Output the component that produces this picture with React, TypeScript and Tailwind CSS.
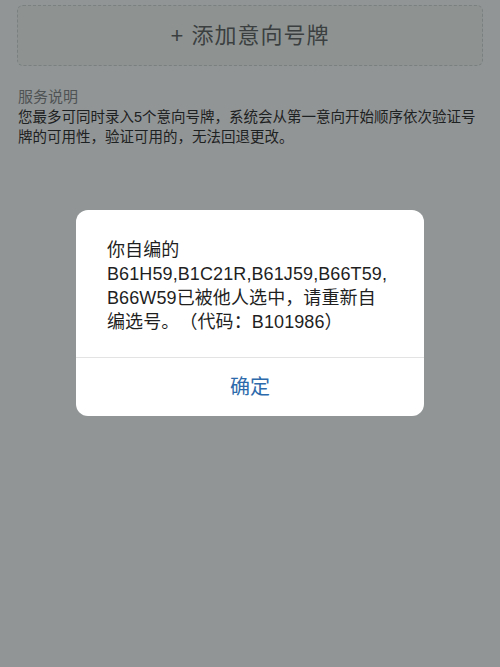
const font = { fontFamily: '"Liberation Sans", "Noto Sans CJK SC", sans-serif' }

function AddPlateButton() {
  return (
    <div className="mx-[17px] mt-[5px] h-[61px] rounded-md border border-dashed border-[#7a7f7f] bg-[#8e9392] flex items-center justify-center">
      <span className="text-[22px] text-[#3b3f40] tracking-[1px]">+ 添加意向号牌</span>
    </div>
  )
}

function ServiceNote() {
  return (
    <div className="px-[18px] mt-[21px]">
      <div className="text-[15px] leading-[20px] text-[#4f5354]">服务说明</div>
      <div className="text-[14.5px] leading-[20px] text-[#1e2121] whitespace-nowrap">
        <div>您最多可同时录入5个意向号牌，系统会从第一意向开始顺序依次验证号</div>
        <div>牌的可用性，验证可用的，无法回退更改。</div>
      </div>
    </div>
  )
}

function AlertDialog() {
  const lines = [
    '你自编的',
    'B61H59,B1C21R,B61J59,B66T59,',
    'B66W59已被他人选中，请重新自',
    '编选号。（代码：B101986）',
  ]
  return (
    <div className="absolute left-[76px] top-[210px] w-[348px] rounded-[12px] bg-white overflow-hidden">
      <div className="pl-[31px] pr-[20px] pt-[28px] pb-[23px] text-[18px] leading-[24px] text-[#1f1f1f] whitespace-nowrap tracking-[0.1px]">
        {lines.map((l) => (
          <div key={l}>{l}</div>
        ))}
      </div>
      <div className="h-px bg-[#e3e3e3]" />
      <button className="w-full h-[58px] flex items-center justify-center text-[20px] text-[#2d6aab]">确定</button>
    </div>
  )
}

export default function App() {
  return (
    <div
      className="relative w-[500px] h-[667px] bg-[#919596] overflow-hidden [text-spacing-trim:space-all]"
      style={font}
    >
      <AddPlateButton />
      <ServiceNote />
      <AlertDialog />
    </div>
  )
}
